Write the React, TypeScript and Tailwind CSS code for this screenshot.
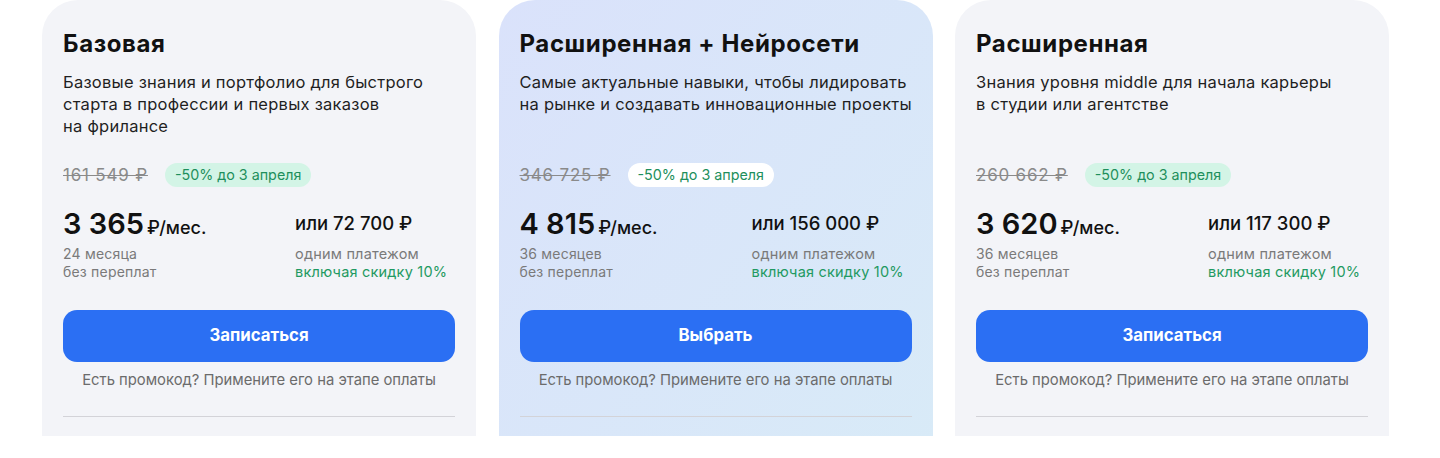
import React from "react";

type Plan = {
  title: string;
  desc: string[];
  old: string;
  price: string;
  months: string;
  full: string;
  button: string;
  featured?: boolean;
};

const plans: Plan[] = [
  {
    title: "Базовая",
    desc: ["Базовые знания и портфолио для быстрого", "старта в профессии и первых заказов", "на фрилансе"],
    old: "161 549 ₽",
    price: "3 365",
    months: "24 месяца",
    full: "или 72 700 ₽",
    button: "Записаться",
  },
  {
    title: "Расширенная + Нейросети",
    desc: ["Самые актуальные навыки, чтобы лидировать", "на рынке и создавать инновационные проекты"],
    old: "346 725 ₽",
    price: "4 815",
    months: "36 месяцев",
    full: "или 156 000 ₽",
    button: "Выбрать",
    featured: true,
  },
  {
    title: "Расширенная",
    desc: ["Знания уровня middle для начала карьеры", "в студии или агентстве"],
    old: "260 662 ₽",
    price: "3 620",
    months: "36 месяцев",
    full: "или 117 300 ₽",
    button: "Записаться",
  },
];

function Card({ p }: { p: Plan }) {
  return (
    <div
      className={
        "w-[434px] h-[520px] shrink-0 rounded-t-[36px] px-[21px] pt-[30px] " +
        (p.featured
          ? "bg-gradient-to-br from-[#dae2fb] to-[#d8ebf7]"
          : "bg-[#f3f4f8]")
      }
    >
      <h2 className="text-[24px] leading-[28px] font-bold text-[#111111] tracking-[0.6px]">
        {p.title}
      </h2>
      <p className="mt-[13px] min-h-[66px] text-[16.5px] leading-[22px] text-[#1f1f1f] tracking-[0.25px]">
        {p.desc.map((l, i) => (
          <span key={i} className="block whitespace-nowrap">
            {l}
          </span>
        ))}
      </p>
      <div className="mt-[26px] flex items-center gap-[17px]">
        <span className="text-[17px] leading-[24px] text-[#8a8a8a] line-through decoration-[#8a8a8a] tracking-[0.8px]">
          {p.old}
        </span>
        <span
          className={
            "h-[24px] rounded-full px-[10px] flex items-center text-[14.3px] text-[#1e8f5c] " +
            (p.featured ? "bg-white" : "bg-[#d3f4e6]")
          }
        >
          -50% до 3 апреля
        </span>
      </div>
      <div className="mt-[20px] grid grid-cols-[232px_1fr]">
        <div>
          <div className="flex items-baseline gap-[3px] h-[34px]">
            <span className="text-[29px] leading-[34px] font-semibold text-[#111111]">{p.price}</span>
            <span className="text-[18px] font-medium text-[#111111]">₽/мес.</span>
          </div>
          <div className="mt-[4px] text-[14px] leading-[18px] text-[#7a7a7a] tracking-[0.2px]">
            <div>{p.months}</div>
            <div>без переплат</div>
          </div>
        </div>
        <div>
          <div className="h-[34px] flex items-center text-[18.5px] font-medium text-[#111111]">
            {p.full}
          </div>
          <div className="mt-[4px] text-[14.5px] leading-[18px] tracking-[0.2px]">
            <div className="text-[#7a7a7a]">одним платежом</div>
            <div className="text-[#1f9a62]">включая скидку 10%</div>
          </div>
        </div>
      </div>
      <button className="mt-[29px] w-full h-[52px] rounded-[14px] bg-[#2b6ff3] text-white text-[16.8px] font-bold">
        {p.button}
      </button>
      <div className="mt-[8px] text-center text-[14.8px] leading-[20px] text-[#6b6b6b]">
        Есть промокод? Примените его на этапе оплаты
      </div>
      <div className="mt-[26px] h-px bg-[#d3d3d8]" />
    </div>
  );
}

export default function App() {
  return (
    <div
      className="w-[1440px] h-[458px] bg-white"
      style={{ fontFamily: "Inter, 'Noto Sans', sans-serif" }}
    >
      <div className="h-[436px] overflow-hidden flex gap-[22.5px] pl-[42px]">
        {plans.map((p, i) => (
          <Card key={i} p={p} />
        ))}
      </div>
    </div>
  );
}
